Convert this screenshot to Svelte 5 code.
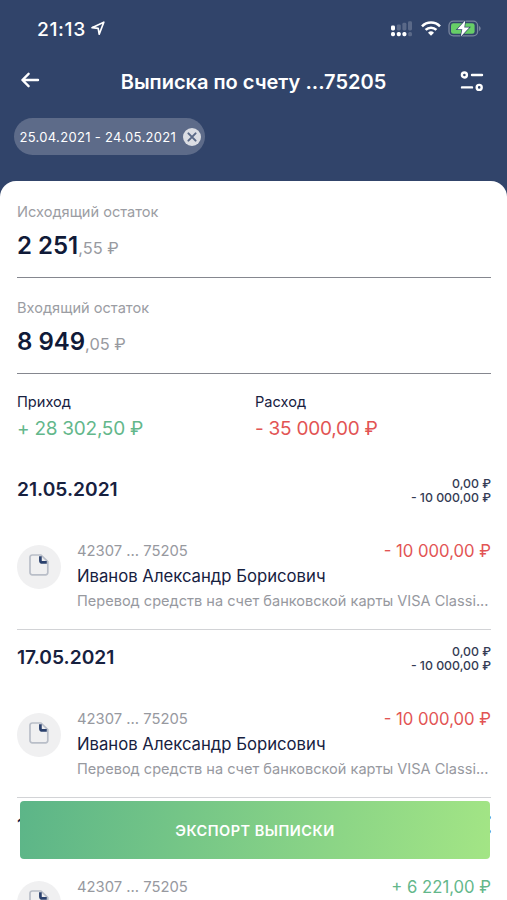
<script>
  const period = '25.04.2021 - 24.05.2021';

  const balances = [
    { label: 'Исходящий остаток', whole: '2 251', cents: ',55 ₽' },
    { label: 'Входящий остаток', whole: '8 949', cents: ',05 ₽' }
  ];

  const days = [
    { date: '21.05.2021', income: '0,00 ₽', expense: '- 10 000,00 ₽', amount: '- 10 000,00 ₽' },
    { date: '17.05.2021', income: '0,00 ₽', expense: '- 10 000,00 ₽', amount: '- 10 000,00 ₽' },
    { date: '14.05.2021', income: '6 221,00 ₽', expense: '0,00 ₽', amount: '+ 6 221,00 ₽' }
  ];
</script>

<div class="screen">
  <div class="status-bar">
    <div class="clock">
      <span class="clock-time">21:13</span>
      <svg width="14" height="15" viewBox="0 0 14 15" fill="none" stroke="#fff" stroke-width="1.7" stroke-linejoin="round">
        <path d="M1 6.7 12.8 1.2 8.2 13.2 7.2 7.4Z" />
      </svg>
    </div>
    <div class="indicators">
      <svg class="signal" width="21" height="16" viewBox="0 0 21 16" fill="#fff">
        <rect x="0" y="4.5" width="4" height="5" rx="1.4" />
        <g opacity="0.2">
          <rect x="5.8" y="3.4" width="4" height="6" rx="1.4" />
          <rect x="11.4" y="1.8" width="4" height="7.6" rx="1.4" />
          <rect x="17" y="0.2" width="4" height="9.2" rx="1.4" />
          <rect x="17.2" y="11" width="3.8" height="4.2" rx="1.5" />
        </g>
        <rect x="0" y="11" width="4" height="4.2" rx="1.6" />
        <rect x="5.8" y="11" width="4" height="4.2" rx="1.6" />
        <rect x="11.4" y="11" width="4" height="4.2" rx="1.6" />
      </svg>
      <svg class="wifi" width="20" height="15" viewBox="0 0 20 15" fill="none" stroke="#fff" stroke-width="2.6">
        <path d="M1 5.3a12.7 12.7 0 0 1 18 0" />
        <path d="M4.6 8.9a7.7 7.7 0 0 1 10.8 0" />
        <path d="M7 11.8a4.3 4.3 0 0 1 6 0L10 14.8Z" fill="#fff" stroke="none" />
      </svg>
      <svg class="battery" width="34" height="17" viewBox="0 0 34 17">
        <rect x="1" y="1.2" width="28.6" height="14.6" rx="4.4" fill="none" stroke="#fff" stroke-opacity="0.35" stroke-width="1.3" />
        <path d="M31.2 6v5c1.8-.8 1.8-4.2 0-5Z" fill="#fff" fill-opacity="0.4" />
        <rect x="3" y="3.2" width="23.6" height="10.6" rx="2.4" fill="#67ce67" />
        <path d="M17.3.6 9.3 9.3h5L12.8 16.4l8.5-8.9h-5Z" fill="#fff" stroke="#31446a" stroke-width="1.4" paint-order="stroke" />
      </svg>
    </div>
  </div>

  <header class="nav-bar">
    <button type="button" class="icon-button" aria-label="Назад">
      <svg width="20" height="18" viewBox="0 0 20 18" fill="none" stroke="#fff" stroke-width="2.4" stroke-linecap="round" stroke-linejoin="round">
        <path d="M18 9H3M8.6 2.8 2.4 9l6.2 6.2" />
      </svg>
    </button>
    <h1>Выписка по счету ...75205</h1>
    <button type="button" class="icon-button filter-button" aria-label="Фильтр">
      <svg width="24" height="22" viewBox="0 0 24 22" fill="none" stroke="#fff" stroke-width="2.4" stroke-linecap="round">
        <circle cx="4.4" cy="5" r="2.5" />
        <path d="M12 5h10M2 17.4h10" />
        <circle cx="19.2" cy="17.4" r="2.5" />
      </svg>
    </button>
  </header>

  <div class="filters">
    <button type="button" class="chip">
      <span>{period}</span>
      <svg width="18" height="18" viewBox="0 0 18 18">
        <circle cx="9" cy="9" r="9" fill="#dcdee4" />
        <path d="m5.4 5.4 7.2 7.2m0-7.2-7.2 7.2" stroke="#5a6987" stroke-width="2" stroke-linecap="round" />
      </svg>
    </button>
  </div>

  <main class="sheet">
    {#each balances as balance}
      <section class="balance">
        <div class="balance-label">{balance.label}</div>
        <div class="balance-value">
          <span class="whole">{balance.whole}</span><span class="cents">{balance.cents}</span>
        </div>
      </section>
    {/each}

    <section class="totals">
      <div>
        <div class="total-label">Приход</div>
        <div class="total-value income">+ 28 302,50 ₽</div>
      </div>
      <div>
        <div class="total-label">Расход</div>
        <div class="total-value expense">- 35 000,00 ₽</div>
      </div>
    </section>

    {#each days as day (day.date)}
      <section class="day">
        <div class="day-header">
          <h2>{day.date}</h2>
          <div class="day-totals">
            <div>{day.income}</div>
            <div>{day.expense}</div>
          </div>
        </div>
        <article class="operation">
          <span class="doc-icon">
            <svg width="20" height="22" viewBox="0 0 20 22" fill="none">
              <path d="M12 1H3.2A2.2 2.2 0 0 0 1 3.2v15.4a2.2 2.2 0 0 0 2.2 2.2h13.4a2.2 2.2 0 0 0 2.2-2.2V7.6Z" stroke="#b9bec8" stroke-width="1.7" stroke-linejoin="round" />
              <path d="M11.4 2.2v4.2a2 2 0 0 0 2 2h4.4" stroke="#2b416d" stroke-width="2.7" />
            </svg>
          </span>
          <div class="operation-body">
            <div class="operation-top">
              <span class="account">42307 ... 75205</span>
              <span class="amount {day.amount.startsWith('+') ? 'income' : 'expense'}">{day.amount}</span>
            </div>
            <div class="payee">Иванов Александр Борисович</div>
            <div class="purpose">Перевод средств на счет банковской карты VISA Classi...</div>
          </div>
        </article>
      </section>
    {/each}
  </main>

  <button type="button" class="export-button">ЭКСПОРТ ВЫПИСКИ</button>
</div>

<style>
  :global(body) {
    margin: 0;
    overflow: hidden;
  }

  .screen {
    position: relative;
    height: 900px;
    overflow: hidden;
    background: #31446a;
    color: #17213f;
    font-family: Inter, 'Liberation Sans', sans-serif;
    white-space: nowrap;
  }

  button {
    padding: 0;
    border: 0;
    background: none;
    color: #fff;
    font-family: inherit;
  }

  svg {
    display: block;
    flex: none;
  }

  .status-bar {
    display: flex;
    align-items: center;
    justify-content: space-between;
    height: 57px;
    padding: 0 25px 0 37px;
    color: #fff;
  }

  .clock,
  .indicators {
    display: flex;
    align-items: center;
  }

  .clock {
    gap: 5px;
  }

  .clock-time {
    font-size: 19.3px;
    font-weight: 500;
    letter-spacing: 0.6px;
  }

  .wifi {
    margin-left: 9px;
  }

  .battery {
    margin-left: 7px;
  }

  .nav-bar {
    display: flex;
    align-items: center;
    justify-content: space-between;
    height: 49px;
    padding: 0 23px 0 20px;
  }

  .icon-button {
    margin-bottom: 3px;
  }

  .filter-button {
    margin-bottom: 1px;
  }

  h1 {
    margin: 0 0 0 7px;
    color: #fff;
    font-size: 20px;
    font-weight: 600;
  }

  .filters {
    display: flex;
    height: 63px;
    padding: 12px 14px 0;
  }

  .chip {
    display: flex;
    align-items: center;
    gap: 7px;
    height: 37px;
    padding: 0 4px 0 5.5px;
    border-radius: 19px;
    background: #5d6b89;
    font-size: 13px;
    letter-spacing: 0.31px;
  }

  .sheet {
    height: 718px;
    padding: 1px 16px 0 17px;
    border-radius: 16px 16px 0 0;
    background: #fff;
  }

  .balance {
    padding: 20px 0 16px;
    border-bottom: 1px solid #85878f;
  }

  .balance-label {
    color: #9b9da3;
    font-size: 14.6px;
    line-height: 20px;
  }

  .balance-value {
    display: flex;
    align-items: baseline;
    height: 30px;
    margin-top: 9px;
    line-height: 30px;
  }

  .whole {
    color: #101a38;
    font-size: 24px;
    font-weight: 600;
  }

  .cents {
    color: #989aa0;
    font-size: 16.4px;
  }

  .totals {
    display: grid;
    grid-template-columns: 1fr 1fr;
    column-gap: 2px;
    height: 70px;
    padding-top: 18px;
  }

  .total-label {
    font-size: 14.6px;
    line-height: 20px;
  }

  .total-value {
    margin-top: 5px;
    font-size: 19px;
    letter-spacing: -0.25px;
    line-height: 24px;
  }

  .income {
    color: #63b78b;
  }

  .expense {
    color: #e25454;
  }

  .day {
    height: 167px;
    border-bottom: 1px solid #d2d3d6;
  }

  .day-header {
    display: flex;
    align-items: center;
    justify-content: space-between;
    height: 54px;
  }

  h2 {
    margin: 0;
    font-size: 19.2px;
    font-weight: 600;
  }

  .day-totals {
    padding-top: 3px;
    color: #343b54;
    font-size: 12.3px;
    font-weight: 500;
    line-height: 14px;
    text-align: right;
  }

  .operation {
    display: flex;
    gap: 16px;
    padding-top: 23px;
  }

  .doc-icon {
    display: flex;
    align-items: center;
    justify-content: center;
    flex: none;
    width: 44px;
    height: 44px;
    margin-top: 6px;
    border-radius: 50%;
    background: #f0f0f1;
  }

  .doc-icon svg {
    margin-top: -5px;
  }

  .operation-body {
    flex: 1;
    min-width: 0;
  }

  .operation-top {
    display: flex;
    justify-content: space-between;
    line-height: 24px;
  }

  .account {
    color: #97999f;
    font-size: 14.8px;
  }

  .amount {
    font-size: 16.7px;
  }

  .payee {
    font-size: 16.7px;
    line-height: 26px;
  }

  .purpose {
    color: #97999f;
    font-size: 14.55px;
    line-height: 24px;
  }

  .export-button {
    position: absolute;
    left: 20px;
    right: 17px;
    bottom: 41px;
    height: 58px;
    border-radius: 4px;
    background: linear-gradient(100deg, #5cb588, #a3e585);
    font-size: 14.5px;
    font-weight: 600;
    letter-spacing: 0.5px;
  }
</style>
